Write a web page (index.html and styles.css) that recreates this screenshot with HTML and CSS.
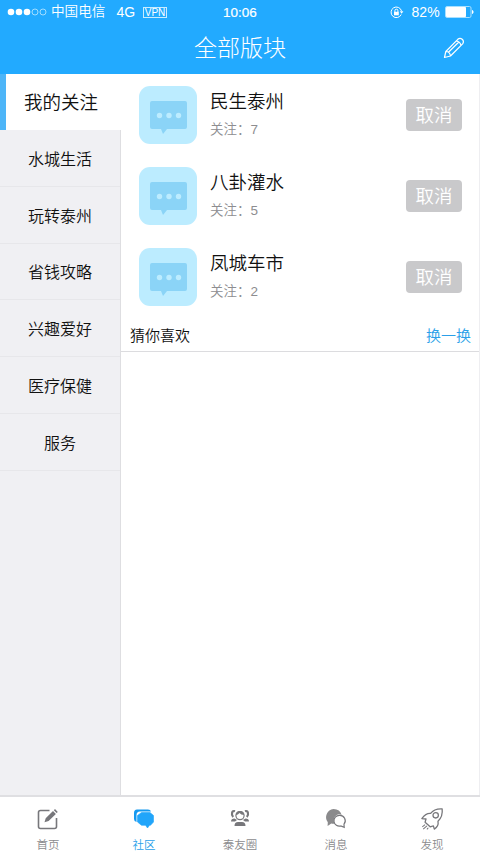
FILE: index.html
```html
<!DOCTYPE html>
<html lang="zh-CN">
<head>
<meta charset="utf-8">
<title>全部版块</title>
<link rel="stylesheet" href="styles.css">
</head>
<body>
<div class="app">
  <header class="header">
    <div class="status">
      <div class="status-left">
        <svg class="signal" width="40" height="8" viewBox="0 0 40 8"><g fill="#fff"><circle cx="4" cy="4" r="3.3"/><circle cx="12" cy="4" r="3.3"/><circle cx="20" cy="4" r="3.3"/></g><g fill="none" stroke="#bfe8ff" stroke-width=".8"><circle cx="28" cy="4" r="3"/><circle cx="36" cy="4" r="3"/></g></svg>
        <span class="carrier">中国电信</span>
        <span class="network">4G</span>
        <span class="vpn">VPN</span>
      </div>
      <time class="clock">10:06</time>
      <div class="status-right">
        <svg width="14" height="13" viewBox="0 0 14 13" fill="none" stroke="#fff"><path d="M11.2 8.5A5.3 5.3 0 1 1 11.5 5" stroke-width="1"/><path d="M9.8 5.2h3.6l-1.8 2.6z" fill="#fff" stroke="none"/><rect x="4" y="5.8" width="4.8" height="3.5" fill="#fff" stroke="none"/><path d="M4.9 6V4.7a1.5 1.5 0 0 1 3 0V6" stroke-width="1"/></svg>
        <span class="percent">82%</span>
        <svg width="29" height="12" viewBox="0 0 29 12"><rect x=".5" y=".5" width="25.5" height="11" rx="1.5" fill="none" stroke="#a9e0ff"/><rect x="1" y="1" width="20" height="10" rx=".8" fill="#fff"/><path d="M27 4c2 .6 2 3.400 0 4z" fill="#fff"/></svg>
      </div>
    </div>
    <div class="titlebar">
      <h1>全部版块</h1>
      <svg class="pencil" width="22" height="22" viewBox="0 0 22 22" fill="none" stroke="#fff" stroke-width="1.2" stroke-linejoin="round"><path d="M1.500 20.500 2.800 14.500 14.800 2.300Q17 .3 19.200 2.300T19.600 6.800L7.500 19zM2.800 14.500Q6.800 14.500 7.500 19M13.200 4Q17.200 4.500 18 8.500M5.200 15.500 15.600 5.200"/></svg>
    </div>
  </header>
  <main class="main">
    <aside class="sidebar">
      <div class="category active">我的关注</div>
      <div class="category">水城生活</div>
      <div class="category">玩转泰州</div>
      <div class="category">省钱攻略</div>
      <div class="category">兴趣爱好</div>
      <div class="category">医疗保健</div>
      <div class="category">服务</div>
    </aside>
    <section class="content">
      <article class="board">
        <svg class="avatar" viewBox="0 0 58 58"><rect width="58" height="58" rx="11" fill="#bcecff"/><path d="M13 15h33q2 0 2 2v24q0 2-2 2H28l-4 5-2-5h-9q-2 0-2-2V17q0-2 2-2z" fill="#8bd4f7"/><g fill="#bcecff"><circle cx="20.500" cy="29.500" r="2.700"/><circle cx="30" cy="29.500" r="2.700"/><circle cx="39.500" cy="29.500" r="2.700"/></g></svg>
        <div class="info"><h2>民生泰州</h2><p>关注：<span>7</span></p></div>
        <button>取消</button>
      </article>
      <article class="board">
        <svg class="avatar" viewBox="0 0 58 58"><rect width="58" height="58" rx="11" fill="#bcecff"/><path d="M13 15h33q2 0 2 2v24q0 2-2 2H28l-4 5-2-5h-9q-2 0-2-2V17q0-2 2-2z" fill="#8bd4f7"/><g fill="#bcecff"><circle cx="20.500" cy="29.500" r="2.700"/><circle cx="30" cy="29.500" r="2.700"/><circle cx="39.500" cy="29.500" r="2.700"/></g></svg>
        <div class="info"><h2>八卦灌水</h2><p>关注：<span>5</span></p></div>
        <button>取消</button>
      </article>
      <article class="board">
        <svg class="avatar" viewBox="0 0 58 58"><rect width="58" height="58" rx="11" fill="#bcecff"/><path d="M13 15h33q2 0 2 2v24q0 2-2 2H28l-4 5-2-5h-9q-2 0-2-2V17q0-2 2-2z" fill="#8bd4f7"/><g fill="#bcecff"><circle cx="20.500" cy="29.500" r="2.700"/><circle cx="30" cy="29.500" r="2.700"/><circle cx="39.500" cy="29.500" r="2.700"/></g></svg>
        <div class="info"><h2>凤城车市</h2><p>关注：<span>2</span></p></div>
        <button>取消</button>
      </article>
      <div class="suggest"><span>猜你喜欢</span><a>换一换</a></div>
    </section>
  </main>
  <nav class="tabs">
    <a class="tab"><svg width="24" height="24" viewBox="0 0 24 24" fill="none" stroke="#77777b"><path d="M13.500 3.500H4.500q-2 0-2 2v14q0 2 2 2h14q2 0 2-2V11" stroke-width="1.600"/><path d="M8.500 15.300 9.700 11.200 17 4l2.900 2.900-7.300 7.200zM17.800 3.200 19 2l2.800 2.900-1.200 1.200z" fill="#77777b" stroke="none"/></svg><span>首页</span></a>
    <a class="tab selected"><svg width="24" height="24" viewBox="0 0 24 24"><path d="M5 2.500h11q2.500 0 3 2H8Q4.500 4.500 4.500 8v7Q2 14.500 2 12V6q0-3.500 3-3.500z" fill="#1599f0"/><path d="M9.500 5.500h8.500l3.500 3v6.500l-3 3.300h-1L15.500 21l-2-2.700h-4l-4-3.300V8.500z" fill="#21a5fa" stroke="#21a5fa" stroke-width=".6" stroke-linejoin="round"/></svg><span>社区</span></a>
    <a class="tab"><svg width="24" height="24" viewBox="0 0 24 24" fill="none" stroke="#77777b"><path d="M7 4.200C4 3 2.800 7.500 5.200 10M17 4.200c3-1.200 4.200 3.300 1.800 5.800" stroke-width="2.200"/><circle cx="12" cy="8.600" r="4.100" stroke-width="1.200"/><path d="M8 8Q8 4 12 4t4 4Q13 8 11.500 6 10 8 8 8z" fill="#77777b" stroke="none"/><path d="M3 14.500q0-3 3.500-3L9 13l-2 1.500zM21 14.500q0-3-3.500-3L15 13l2 1.500zM6.500 19q0-4 3.500-4h4q3.500 0 3.500 4z" fill="#77777b" stroke="none"/></svg><span>泰友圈</span></a>
    <a class="tab"><svg width="24" height="24" viewBox="0 0 24 24"><path d="M9.500 2A8.200 8.200 0 0 0 3.800 15.200L3.600 19l3.700-2.400q1.500.3 3 .1-1.800-6.200 2.400-8.700 2.500-1.500 5 0Q16 2 9.500 2z" fill="#8a8a8c"/><path d="M15.400 8.400a5.400 5.400 0 1 0 1.400 10.600l3.400 1.400-.2-3.200A5.400 5.400 0 0 0 15.400 8.400z" fill="#fff" stroke="#77777b" stroke-width="1.200"/></svg><span>消息</span></a>
    <a class="tab"><svg width="26" height="26" viewBox="0 0 26 26" fill="none" stroke="#77777b" stroke-width="1.400" stroke-linejoin="round"><path d="M24 2Q15.500 1.500 11.500 7 6.500 6.500 2 12.500L6.500 13 5.500 16.500 11 21.500 14.500 20.500 15.500 24Q20.500 20.500 19.500 15.500 25 10 24 2z"/><circle cx="17" cy="9" r="2.900"/><path d="M5.500 19 2.500 21.500M7.500 20.500 3.500 24M9 22.500 7.500 24.300" stroke-width="1.100"/></svg><span>发现</span></a>
  </nav>
</div>
</body>
</html>
```
FILE: styles.css
```css
* { box-sizing: border-box; }
body {
  margin: 0;
  background: #fff;
  font-family: "Liberation Sans", "Noto Sans CJK SC", sans-serif;
  font-weight: 350;
  color: #111;
}
h1, h2, p { margin: 0; font-weight: 350; }
.app { width: 480px; height: 853px; display: flex; flex-direction: column; overflow: hidden; }

.header { height: 74px; background: #22aaff; color: #fff; flex: none; }
.status {
  height: 24px;
  display: grid;
  grid-template-columns: 1fr auto 1fr;
  align-items: center;
  padding: 0 6px;
}
.status-left, .status-right { display: flex; align-items: center; height: 24px; line-height: 22px; }
.status-left { padding-left: 1px; }
.status-right { justify-content: flex-end; }
.carrier { font-size: 13.6px; margin-left: 4px; }
.network { font-size: 14px; margin-left: 11px; }
.vpn { margin-left: 8px; width: 24px; height: 11px; border: 1px solid #c8ecff; font-size: 10px; line-height: 10px; text-align: center; }
.clock { font-size: 13.5px; font-weight: 400; -webkit-text-stroke: .2px #fff; }
.percent { font-size: 14px; margin: 0 5px 0 7px; letter-spacing: .2px; }
.titlebar { height: 50px; display: grid; grid-template-columns: 1fr auto 1fr; align-items: center; padding-right: 15px; padding-left: 15px; }
.titlebar h1 { grid-column: 2; font-size: 23px; line-height: 46px; font-weight: 300; padding-bottom: 3px; }
.pencil { justify-self: end; margin-bottom: 2px; }

.main { flex: 1; min-height: 0; display: flex; }
.sidebar { width: 121px; background: #f0f0f3; border-right: 1px solid #dedee1; }
.category {
  height: 56.8px;
  border-bottom: 1px solid #e7e7ea;
  display: flex;
  align-items: center;
  justify-content: center;
  font-size: 16px;
}
.category.active {
  width: 121px;
  height: 56px;
  background: #fff;
  border-left: 6px solid #4db5f8;
  border-bottom: 0;
  font-size: 18.500px;
  padding: 0 5px 2px 0;
}
.content { flex: 1; border-right: 1px solid #eeeef1; }
.board { height: 81px; display: flex; align-items: center; padding: 0 17px 0 18px; }
.avatar { width: 58px; height: 58px; flex: none; }
.info { flex: 1; margin-left: 13px; padding-top: 1px; }
.info h2 { font-size: 18.500px; line-height: 30px; }
.info p { font-size: 13.500px; line-height: 26px; color: #8d8d90; }
.info span { font-weight: 400; }
.board button {
  width: 56px;
  height: 32px;
  padding: 0 0 2px;
  border: 0;
  border-radius: 4px;
  background: #c9c9cb;
  color: #fff;
  font: 350 18.500px/30px "Noto Sans CJK SC", sans-serif;
}
.suggest {
  height: 35px;
  border-bottom: 1px solid #dcdcdf;
  padding: 0 8px 0 9px;
  display: flex;
  align-items: center;
  justify-content: space-between;
  font-size: 15px;
}
.suggest a { color: #2a9fe9; }

.tabs { height: 58px; flex: none; border-top: 2px solid #dfdfe2; display: grid; grid-template-columns: repeat(5, 1fr); }
.tab { display: flex; flex-direction: column; align-items: center; color: #8b8b8e; font-size: 11.500px; line-height: 18px; }
.tab svg { height: 24px; margin-top: 10px; flex: none; }
.tab span { margin-top: 5px; }
.tab.selected { color: #2a9fe9; }
```
